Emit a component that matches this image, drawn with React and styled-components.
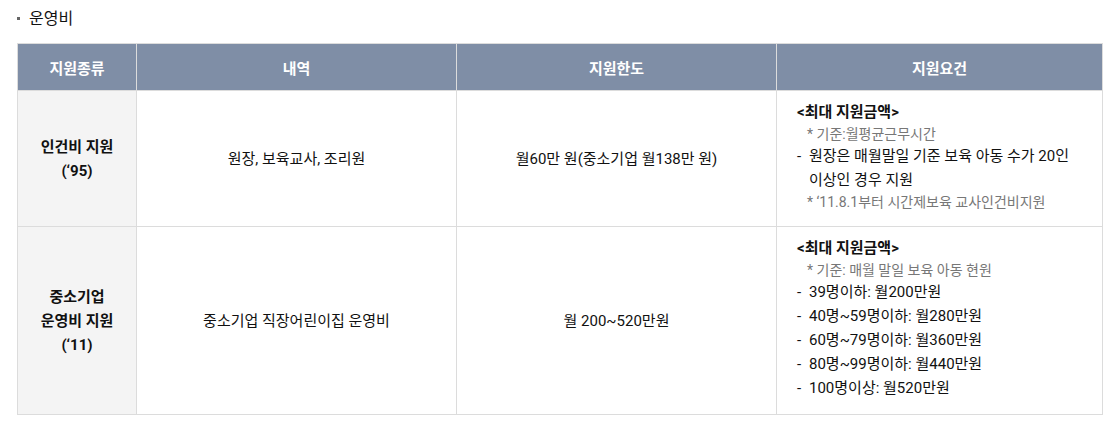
import React from "react";
import styled, { createGlobalStyle } from "styled-components";

const Global = createGlobalStyle`
  html, body { margin: 0; padding: 0; background: #fff; }
  body { font-family: Roboto, "Noto Sans CJK KR", sans-serif; color: #111; }
`;

const Page = styled.div`
  padding: 8px 17px 0 17px;
`;

const Title = styled.h3`
  margin: 0 0 14px 0;
  display: flex;
  align-items: center;
  gap: 9px;
  font-size: 16px;
  font-weight: 400;
  line-height: 21px;
  color: #111;
  &::before {
    content: "";
    width: 3px;
    height: 3px;
    background: #666;
  }
`;

const Table = styled.table`
  width: 1085px;
  border-collapse: collapse;
  table-layout: fixed;
  font-size: 15px;
`;

const Th = styled.th`
  background: #7f8ea6;
  color: #fff;
  font-weight: 700;
  height: 46px;
  padding: 0;
  border: 1px solid #dcdcdc;
  text-align: center;
`;

const RowHead = styled.td`
  background: #f4f4f4;
  font-weight: 700;
  text-align: center;
  line-height: 24px;
  border: 1px solid #dcdcdc;
  padding: 0;
`;

const Td = styled.td`
  text-align: center;
  border: 1px solid #dcdcdc;
  line-height: 24px;
  padding: 0;
`;

const ReqCell = styled.td`
  border: 1px solid #dcdcdc;
  padding: 9px 20px 14px 20px;
  text-align: left;
  vertical-align: middle;
`;

const Strong = styled.div`
  font-weight: 700;
  line-height: 24px;
`;

const Note = styled.div`
  color: #777;
  font-size: 14px;
  line-height: 20px;
  padding-left: 10px;
`;

const Dash = styled.div`
  line-height: 24px;
  padding-left: 12px;
  text-indent: -12px;
  &::before {
    content: "-";
    display: inline-block;
    width: 12px;
    text-indent: 0;
  }
`;

export default function App() {
  return (
    <>
      <Global />
      <Page>
        <Title>운영비</Title>
        <Table>
          <colgroup>
            <col style={{ width: 119 }} />
            <col style={{ width: 320 }} />
            <col style={{ width: 320 }} />
            <col style={{ width: 326 }} />
          </colgroup>
          <thead>
            <tr>
              <Th>지원종류</Th>
              <Th>내역</Th>
              <Th>지원한도</Th>
              <Th>지원요건</Th>
            </tr>
          </thead>
          <tbody>
            <tr>
              <RowHead>
                인건비 지원
                <br />
                (‘95)
              </RowHead>
              <Td>원장, 보육교사, 조리원</Td>
              <Td>월60만 원(중소기업 월138만 원)</Td>
              <ReqCell>
                <Strong>&lt;최대 지원금액&gt;</Strong>
                <Note>* 기준:월평균근무시간</Note>
                <Dash>원장은 매월말일 기준 보육 아동 수가 20인 이상인 경우 지원</Dash>
                <Note>* ‘11.8.1부터 시간제보육 교사인건비지원</Note>
              </ReqCell>
            </tr>
            <tr>
              <RowHead>
                중소기업
                <br />
                운영비 지원
                <br />
                (‘11)
              </RowHead>
              <Td>중소기업 직장어린이집 운영비</Td>
              <Td>월 200~520만원</Td>
              <ReqCell>
                <Strong>&lt;최대 지원금액&gt;</Strong>
                <Note>* 기준: 매월 말일 보육 아동 현원</Note>
                <Dash>39명이하: 월200만원</Dash>
                <Dash>40명~59명이하: 월280만원</Dash>
                <Dash>60명~79명이하: 월360만원</Dash>
                <Dash>80명~99명이하: 월440만원</Dash>
                <Dash>100명이상: 월520만원</Dash>
              </ReqCell>
            </tr>
          </tbody>
        </Table>
      </Page>
    </>
  );
}
